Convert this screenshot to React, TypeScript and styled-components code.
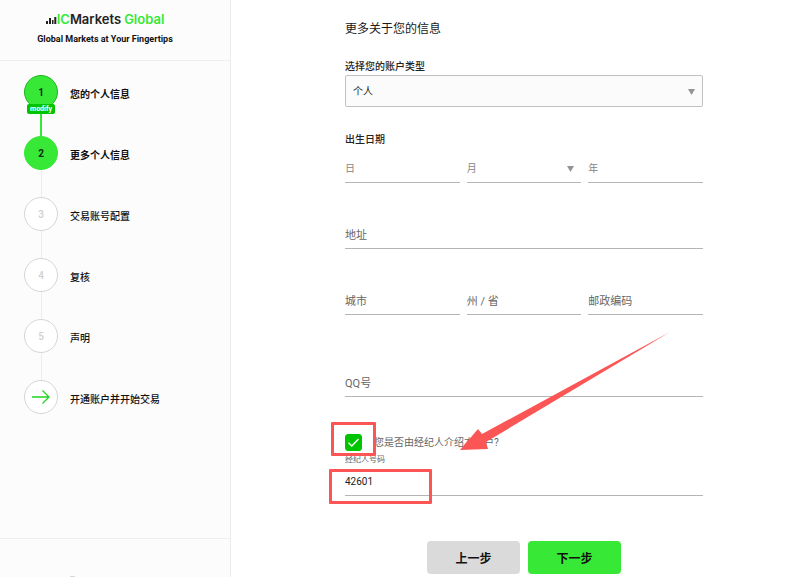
import React from "react";
import styled, { createGlobalStyle } from "styled-components";

const GlobalStyle = createGlobalStyle`
  *, *::before, *::after { box-sizing: border-box; }
  body {
    margin: 0;
    background: #ffffff;
    color: #1a1a1a;
    font-family: Roboto, "Noto Sans CJK SC", sans-serif;
    font-size: 10px;
  }
  input, select, button { font-family: inherit; margin: 0; }
`;

const Page = styled.div`
  display: flex;
  min-height: 100vh;
`;

const Sidebar = styled.aside`
  flex: 0 0 231px;
  display: flex;
  flex-direction: column;
  background: #fcfcfc;
  border-right: 1px solid #ececec;
`;

const Brand = styled.header`
  display: flex;
  flex-direction: column;
  align-items: center;
  padding: 9px 20px 12px 0;
  border-bottom: 1px solid #efefef;
`;

const Logo = styled.div`
  display: flex;
  align-items: baseline;
  font-family: Inter, "Liberation Sans", sans-serif;
  font-size: 13px;
  line-height: 20px;
  font-weight: 600;
  color: #222222;
`;

const Green = styled.span<{ $gap?: boolean }>`
  margin-left: ${(p) => (p.$gap ? 3 : 0)}px;
  color: #37e837;
`;

const Bars = styled.svg`
  width: 11px;
  height: 8px;
`;

const Tagline = styled.p`
  margin: 2px 0 0;
  font-size: 9px;
  line-height: 17px;
  font-weight: 700;
  color: #111111;
`;

const Steps = styled.ol`
  list-style: none;
  margin: 0;
  padding: 14px 16px 0 24px;
  flex: 1;
`;

const Step = styled.li<{ $line?: string }>`
  display: grid;
  grid-template-columns: 34px 1fr;
  column-gap: 12px;
  height: 61px;
  align-content: start;
  grid-template-rows: 34px 27px;

  &::after {
    content: "";
    justify-self: center;
    width: ${(p) => (p.$line === "active" ? "2px" : "1px")};
    background: ${(p) => (p.$line === "active" ? "#37e837" : p.$line === "none" ? "transparent" : "#ececec")};
  }
`;

const Marker = styled.span<{ $active: boolean; $edge?: string }>`
  position: relative;
  display: flex;
  align-items: center;
  justify-content: center;
  width: 34px;
  height: 34px;
  border-radius: 50%;
  border: 1px solid ${(p) => p.$edge ?? "#d6d6d6"};
  background: ${(p) => (p.$active ? "#37e837" : "#ffffff")};
  color: ${(p) => (p.$active ? "#0c2a0c" : "#cfcfcf")};
  font-weight: ${(p) => (p.$active ? 700 : 500)};
  font-size: 10px;
`;

const Modify = styled.a`
  position: absolute;
  left: 2px;
  bottom: -6px;
  width: 28px;
  border-radius: 2px;
  background: #00c400;
  color: #ffffff;
  font-size: 7px;
  line-height: 10px;
  font-weight: 700;
  text-align: center;
  text-decoration: none;
`;

const StepLabel = styled.span<{ $bold: boolean }>`
  align-self: center;
  padding-top: 6px;
  line-height: 14px;
  font-weight: ${(p) => (p.$bold ? 700 : 500)};
  color: #111111;
`;

const SidebarFooter = styled.footer`
  display: flex;
  align-items: flex-end;
  height: 39px;
  padding-left: 70px;
  border-top: 1px solid #efefef;

  &::before {
    content: "";
    width: 5px;
    height: 1px;
    background: #d6d6d6;
  }
`;

const Main = styled.main`
  flex: 1;
  min-width: 0;
  padding: 20px 89px 0 114px;
`;

const Form = styled.form`
  position: relative;
  display: flex;
  flex-direction: column;
`;

const Title = styled.h1`
  margin: 0;
  font-size: 12px;
  line-height: 18px;
  font-weight: 400;
`;

const Label = styled.label`
  display: block;
  line-height: 16px;
  font-weight: 500;
  color: #222222;
`;

const AccountField = styled.div`
  margin-top: 21px;
`;

const SelectWrap = styled.div`
  display: grid;
  align-items: center;

  & > * { grid-area: 1 / 1; }
`;

const Caret = styled.svg<{ $inset: number }>`
  justify-self: end;
  margin-top: 2px;
  margin-right: ${(p) => p.$inset}px;
  width: 7px;
  height: 6px;
  fill: #949494;
  pointer-events: none;
`;

const BoxSelect = styled.select`
  appearance: none;
  width: 100%;
  height: 32px;
  padding: 1px 7px 0;
  border: 1px solid #c0c0c0;
  border-radius: 2px;
  background: #fbfbfb;
  font-size: 10px;
  color: #222222;
`;

const Birth = styled.fieldset`
  margin: 25px 0 0;
  padding: 0;
  border: 0;
  min-width: 0;
`;

const Legend = styled.legend`
  padding: 0;
  line-height: 16px;
  font-weight: 500;
  color: #222222;
`;

const Columns = styled.div<{ $top: number }>`
  display: grid;
  grid-template-columns: repeat(3, 1fr);
  column-gap: 7px;
  margin-top: ${(p) => p.$top}px;
`;

const LineInput = styled.input<{ $top?: number; $small?: boolean }>`
  display: block;
  width: 100%;
  min-width: 0;
  height: 30px;
  margin-top: ${(p) => p.$top ?? 0}px;
  padding: ${(p) => (p.$small ? 2 : 4)}px 0 0;
  border: 0;
  border-bottom: 1px solid #b5b5b5;
  border-radius: 0;
  background: transparent;
  color: #222222;
  font-size: ${(p) => (p.$small ? 10 : 11)}px;

  &::placeholder {
    color: ${(p) => (p.$small ? "#858585" : "#666666")};
    opacity: 1;
  }
`;

const LineSelect = styled.select`
  appearance: none;
  width: 100%;
  height: 30px;
  padding: 2px 0 0;
  border: 0;
  border-bottom: 1px solid #b5b5b5;
  border-radius: 0;
  background: transparent;
  font-size: 10px;
  color: #858585;
`;

const BrokerCheck = styled.div`
  display: flex;
  align-items: center;
  gap: 12px;
  margin-top: 37px;
`;

const CheckWrap = styled.span`
  display: grid;

  & > * { grid-area: 1 / 1; }
`;

const Checkbox = styled.input`
  appearance: none;
  width: 17px;
  height: 17px;
  border-radius: 3px;
  border: 1px solid #00c400;
  background: #ffffff;

  &:checked { background: #00c400; }
`;

const Tick = styled.svg`
  width: 17px;
  height: 17px;
  fill: none;
  stroke: #ffffff;
  stroke-width: 1.4;
  pointer-events: none;
`;

const CheckLabel = styled.label`
  padding-top: 1px;
  color: #666666;
  line-height: 16px;
`;

const SmallLabel = styled.label`
  margin-top: 3px;
  font-size: 8px;
  line-height: 12px;
  color: #666666;
`;

const Actions = styled.div`
  display: flex;
  justify-content: center;
  gap: 8px;
  margin-top: 45px;
`;

const Button = styled.button<{ $primary?: boolean }>`
  width: 93px;
  height: 33px;
  padding: 0;
  border: 0;
  border-radius: 4px;
  background: ${(p) => (p.$primary ? "#37e837" : "#dadada")};
  color: #111111;
  font-size: 12px;
  font-weight: 700;
`;

const Highlight = styled.span<{ $x: number; $y: number; $w: number; $h: number }>`
  position: absolute;
  left: ${(p) => p.$x}px;
  top: ${(p) => p.$y}px;
  width: ${(p) => p.$w}px;
  height: ${(p) => p.$h}px;
  border: 3px solid #fc5555;
  border-radius: 1px;
  pointer-events: none;
`;

const Arrow = styled.svg`
  position: absolute;
  left: 114px;
  top: 311px;
  width: 213px;
  height: 121px;
  fill: #fc5555;
  pointer-events: none;
`;

const steps = [
  { label: "您的个人信息", active: true, line: "active", edge: "#22b422", modify: true },
  { label: "更多个人信息", active: true, edge: "#37e837" },
  { label: "交易账号配置", active: false },
  { label: "复核", active: false },
  { label: "声明", active: false },
  { label: "开通账户并开始交易", active: false, line: "none", arrow: true },
];

export default function App() {
  return (
    <>
      <GlobalStyle />
      <Page lang="zh-CN">
        <Sidebar>
          <Brand>
            <Logo>
              <Bars viewBox="0 0 11 8" fill="#222222" aria-hidden="true">
                <rect x="0" y="5" width="2" height="3" />
                <rect x="3" y="2" width="2" height="6" />
                <rect x="6" y="4" width="1.5" height="4" />
                <rect x="8.3" y="1" width="2" height="7" />
              </Bars>
              <Green>IC</Green>
              <span>Markets</span>
              <Green $gap>Global</Green>
            </Logo>
            <Tagline>Global Markets at Your Fingertips</Tagline>
          </Brand>
          <Steps>
            {steps.map((s, i) => (
              <Step key={s.label} $line={s.line}>
                <Marker $active={s.active} $edge={s.edge}>
                  {s.arrow ? (
                    <svg width="18" height="14" viewBox="0 0 18 14" fill="none" stroke="#22d422" strokeWidth="1.3" aria-hidden="true">
                      <path d="M0 7H17M10.5 0.5L17 7L10.5 13.5" />
                    </svg>
                  ) : (
                    i + 1
                  )}
                  {s.modify && <Modify href="#modify">modify</Modify>}
                </Marker>
                <StepLabel $bold={s.active}>{s.label}</StepLabel>
              </Step>
            ))}
          </Steps>
          <SidebarFooter />
        </Sidebar>
        <Main>
          <Form onSubmit={(e) => e.preventDefault()}>
            <Title>更多关于您的信息</Title>
            <AccountField>
              <Label htmlFor="account">选择您的账户类型</Label>
              <SelectWrap>
                <BoxSelect id="account" defaultValue="个人">
                  <option>个人</option>
                </BoxSelect>
                <Caret $inset={8} viewBox="0 0 7 6" aria-hidden="true"><path d="M0 0H7L3.5 6Z" /></Caret>
              </SelectWrap>
            </AccountField>
            <Birth>
              <Legend>出生日期</Legend>
              <Columns $top={5}>
                <LineInput $small aria-label="日" placeholder="日" />
                <SelectWrap>
                  <LineSelect aria-label="月" defaultValue="月">
                    <option>月</option>
                  </LineSelect>
                  <Caret $inset={7} viewBox="0 0 7 6" aria-hidden="true"><path d="M0 0H7L3.5 6Z" /></Caret>
                </SelectWrap>
                <LineInput $small aria-label="年" placeholder="年" />
              </Columns>
            </Birth>
            <LineInput $top={36} aria-label="地址" placeholder="地址" />
            <Columns $top={36}>
              <LineInput aria-label="城市" placeholder="城市" />
              <LineInput aria-label="州 / 省" placeholder="州 / 省" />
              <LineInput aria-label="邮政编码" placeholder="邮政编码" />
            </Columns>
            <LineInput $top={52} aria-label="QQ号" placeholder="QQ号" />
            <BrokerCheck>
              <CheckWrap>
                <Checkbox id="broker" type="checkbox" defaultChecked />
                <Tick viewBox="0 0 17 17" aria-hidden="true"><path d="M3.5 8.8L6.8 12L13.5 5" /></Tick>
              </CheckWrap>
              <CheckLabel htmlFor="broker">您是否由经纪人介绍本账户?</CheckLabel>
            </BrokerCheck>
            <SmallLabel htmlFor="code">经纪人号码</SmallLabel>
            <LineInput $small id="code" defaultValue="42601" />
            <Actions>
              <Button type="button">上一步</Button>
              <Button type="submit" $primary>下一步</Button>
            </Actions>
            <Highlight $x={-14} $y={402} $w={45} $h={34} />
            <Highlight $x={-16} $y={449} $w={103} $h={35} />
            <Arrow viewBox="0 0 213 121" aria-hidden="true">
              <path d="M211 1L23 103L19 98L1 119L29 118L27 111Z" />
            </Arrow>
          </Form>
        </Main>
      </Page>
    </>
  );
}
